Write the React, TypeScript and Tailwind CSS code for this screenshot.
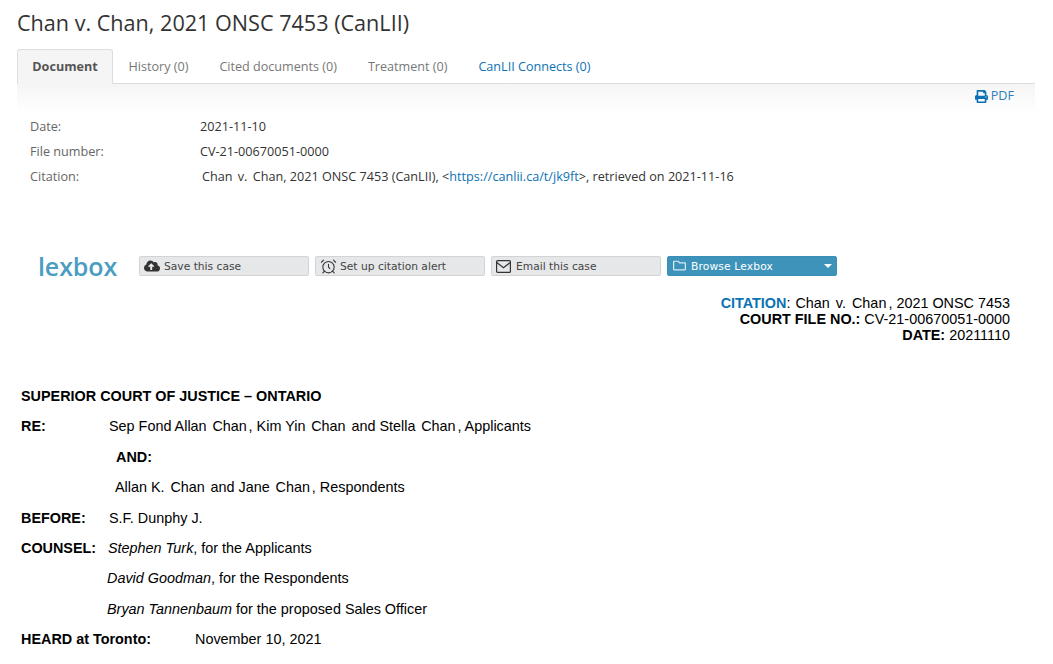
import { FaCloudUploadAlt, FaPrint, FaRegFolder } from "react-icons/fa";
import { LuAlarmClock } from "react-icons/lu";

function Tab({ children, blue }: { children: string; blue?: boolean }) {
  return (
    <div className={"px-[15.5px] pt-[9px] text-[12.6px] leading-[18px] " + (blue ? "text-[#0b72b5]" : "text-[#777777]")}>
      {children}
    </div>
  );
}

function Meta({ label, children }: { label: string; children: React.ReactNode }) {
  return (
    <div className="flex h-[25px] items-center">
      <div className="w-[170px] text-[#666666]">{label}</div>
      <div className="text-[#333333]">{children}</div>
    </div>
  );
}

function LexButton({ icon, children }: { icon: React.ReactNode; children: string }) {
  return (
    <div className="flex h-[20px] w-[170px] items-center rounded-[2px] border border-[#d2d3d5] bg-[#e6e7e8] pl-[4px] font-['DejaVu_Sans',sans-serif] text-[10.7px] text-[#444444]">
      <span className="flex w-[20px] shrink-0 items-center">{icon}</span>
      <span className="pt-[2px]">{children}</span>
    </div>
  );
}

function Name({ children }: { children: string }) {
  return <span className="mx-[1.8px]">{children}</span>;
}

function Row({ label, children, className }: { label?: string; children: React.ReactNode; className?: string }) {
  return (
    <div className={"flex h-[30.4px] items-center " + (className ?? "")}>
      {label && <b className="w-[88px] shrink-0">{label}</b>}
      <div>{children}</div>
    </div>
  );
}

export default function App() {
  return (
    <div className="h-[664px] w-[1053px] overflow-hidden bg-white">
      <div className="font-['Open_Sans',sans-serif] text-[12.65px]">
        <h1 className="pl-[17px] pt-[8px] text-[21.6px] leading-[30px] text-[#333333]">Chan v. Chan, 2021 ONSC 7453 (CanLII)</h1>
        <div className="ml-[17px] mr-[18px] mt-[11px] flex h-[35px] border-b border-[#dddddd]">
          <div className="mb-[-1px] h-[35px] w-[96px] rounded-t-[3px] border border-b-0 border-[#dddddd] bg-[#f5f5f5] pt-[8px] text-center text-[12.6px] font-bold leading-[18px] text-[#555555]">
            Document
          </div>
          <Tab>History (0)</Tab>
          <Tab>Cited documents (0)</Tab>
          <Tab>Treatment (0)</Tab>
          <Tab blue>CanLII Connects (0)</Tab>
        </div>
        <div className="ml-[17px] mr-[18px] flex h-[29px] justify-end bg-gradient-to-b from-[#f5f5f5] to-white pr-[21px] pt-[4px]">
          <div className="flex items-center gap-[3px] self-start text-[12.6px] leading-[16px] text-[#2a80c0]">
            <FaPrint className="text-[13px] text-[#0b72b5]" />
            <span>PDF</span>
          </div>
        </div>
        <div className="pl-[30px] pt-[1px]">
          <Meta label="Date:">2021-11-10</Meta>
          <Meta label="File number:">CV-21-00670051-0000</Meta>
          <div className="flex h-[25px] items-center">
            <div className="w-[172px] text-[#666666]">Citation:</div>
            <div className="text-[#333333]">
              <span className="[word-spacing:2px]">Chan v. Chan</span>, 2021 ONSC 7453 (CanLII), &lt;<span className="text-[#0b72b5]">https://canlii.ca/t/jk9ft</span>&gt;, retrieved on 2021-11-16
            </div>
          </div>
        </div>
      </div>

      <div className="ml-[38px] mt-[62px] flex h-[30px] items-center">
        <div className="w-[101px] font-['Open_Sans',sans-serif] text-[25px] font-semibold leading-[30px] tracking-[-0.1px] text-[#4a9dc1]">lexbox</div>
        <div className="flex gap-[6px]">
          <LexButton icon={<FaCloudUploadAlt className="text-[16px] text-[#333333]" />}>Save this case</LexButton>
          <LexButton icon={<LuAlarmClock className="text-[17px] text-[#333333]" strokeWidth={1.5} />}>Set up citation alert</LexButton>
          <LexButton
            icon={
              <svg width="15" height="13" viewBox="0 0 15 13" fill="none" stroke="#333333" strokeWidth="1.2">
                <rect x="0.6" y="0.6" width="13.8" height="11.8" rx="1" />
                <path d="M0.8 2.5 L7.5 7.8 L14.2 2.5" />
              </svg>
            }
          >
            Email this case
          </LexButton>
          <div className="flex h-[20px] w-[170px] items-center rounded-[2px] border border-[#3a8fb7] bg-[#3d93ba] pl-[5px] font-['DejaVu_Sans',sans-serif] text-[10.7px] text-white">
            <FaRegFolder className="mb-[2px] text-[13px] text-[#dcecf4]" />
            <span className="ml-[5px] grow pt-[2px] font-medium tracking-[0.15px]">Browse Lexbox</span>
            <span className="mr-[4px] h-0 w-0 border-x-[4px] border-t-[4px] border-x-transparent border-t-white" />
          </div>
        </div>
      </div>

      <div className="font-['Liberation_Sans',sans-serif] text-[14.4px] text-black">
        <div className="mr-[43px] mt-[14px] text-right leading-[16px]">
          <p><b className="text-[#0b72b5]">CITATION</b>: <span className="ml-[1px] mr-[2px] [word-spacing:2px]">Chan v. Chan</span>, 2021 ONSC 7453</p>
          <p><b>COURT FILE NO.:</b> CV-21-00670051-0000</p>
          <p><b>DATE:</b> 20211110</p>
        </div>
        <div className="pl-[21px] pt-[38.7px]">
          <Row><b>SUPERIOR COURT OF JUSTICE – ONTARIO</b></Row>
          <Row label="RE:">Sep Fond Allan <Name>Chan</Name>, Kim Yin <Name>Chan</Name> and Stella <Name>Chan</Name>, Applicants</Row>
          <Row className="pl-[95px]"><b>AND:</b></Row>
          <Row className="pl-[94px]">Allan K. <Name>Chan</Name> and Jane <Name>Chan</Name>, Respondents</Row>
          <Row label="BEFORE:">S.F. Dunphy J.</Row>
          <div className="flex h-[30.4px] items-center">
            <b className="w-[87px] shrink-0">COUNSEL:</b>
            <span><i>Stephen Turk</i>, for the Applicants</span>
          </div>
          <Row className="pl-[86px]"><span><i>David Goodman</i>, for the Respondents</span></Row>
          <Row className="pl-[86px]"><span><i>Bryan Tannenbaum</i> for the proposed Sales Officer</span></Row>
          <div className="flex h-[30.4px] items-center">
            <b className="w-[174px] shrink-0">HEARD at Toronto:</b>
            <span>November 10, 2021</span>
          </div>
        </div>
      </div>
    </div>
  );
}
